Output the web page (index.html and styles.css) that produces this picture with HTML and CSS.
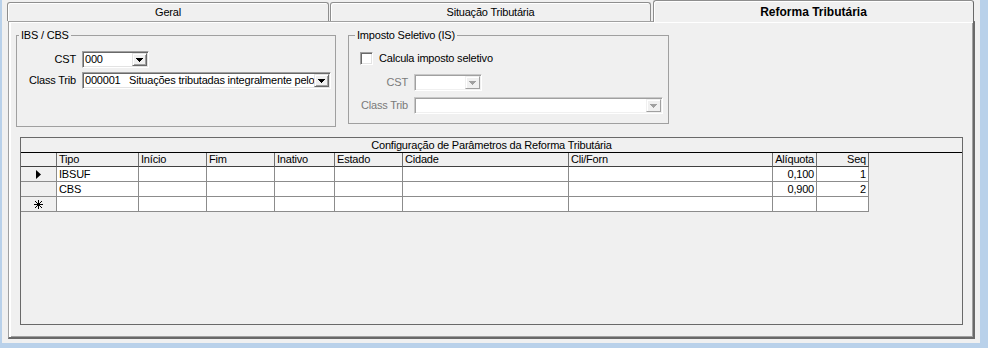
FILE: index.html
```html
<!DOCTYPE html>
<html lang="pt-BR">
<head>
<meta charset="utf-8">
<title>Reforma Tributária</title>
<link rel="stylesheet" href="styles.css">
</head>
<body>
<div class="frame">
  <div class="tabs">
    <div class="tab tab-1">Geral</div>
    <div class="tab tab-2">Situação Tributária</div>
    <div class="tab tab-3 active">Reforma Tributária</div>
  </div>
  <div class="page">
    <div class="groups">
      <fieldset class="group g-ibs">
        <legend>IBS / CBS</legend>
        <div class="form form-ibs">
          <span class="lbl">CST</span>
          <div class="combo w-cst1"><span class="val">000</span><span class="btn"><svg width="7" height="4" viewBox="0 0 7 4"><path d="M0 0h7v1h-1v1h-1v1h-1v1h-1v-1h-1v-1h-1v-1h-1z"/></svg></span></div>
          <span class="lbl">Class Trib</span>
          <div class="combo w-ct"><span class="val">000001   Situações tributadas integralmente pelo</span><span class="btn"><svg width="7" height="4" viewBox="0 0 7 4"><path d="M0 0h7v1h-1v1h-1v1h-1v1h-1v-1h-1v-1h-1v-1h-1z"/></svg></span></div>
        </div>
      </fieldset>
      <fieldset class="group g-is">
        <legend>Imposto Seletivo (IS)</legend>
        <div class="check"><span class="box"></span><span>Calcula imposto seletivo</span></div>
        <div class="form form-is">
          <span class="lbl dis-lbl">CST</span>
          <div class="combo dis w-cst2"><span class="val"></span><span class="btn"><svg width="7" height="4" viewBox="0 0 7 4"><path d="M0 0h7v1h-1v1h-1v1h-1v1h-1v-1h-1v-1h-1v-1h-1z"/></svg></span></div>
          <span class="lbl dis-lbl">Class Trib</span>
          <div class="combo dis w-ct"><span class="val"></span><span class="btn"><svg width="7" height="4" viewBox="0 0 7 4"><path d="M0 0h7v1h-1v1h-1v1h-1v1h-1v-1h-1v-1h-1v-1h-1z"/></svg></span></div>
        </div>
      </fieldset>
    </div>
    <div class="grid">
      <div class="grid-caption">Configuração de Parâmetros da Reforma Tributária</div>
      <div class="row head">
        <span class="ind"></span><span>Tipo</span><span>Início</span><span>Fim</span><span>Inativo</span><span>Estado</span><span>Cidade</span><span>Cli/Forn</span><span class="num">Alíquota</span><span class="num">Seq</span>
      </div>
      <div class="row">
        <span class="ind"><svg width="5" height="9" viewBox="0 0 5 9"><path d="M0 0L5 4.5L0 9z"/></svg></span><span>IBSUF</span><span></span><span></span><span></span><span></span><span></span><span></span><span class="num">0,100</span><span class="num">1</span>
      </div>
      <div class="row">
        <span class="ind"></span><span>CBS</span><span></span><span></span><span></span><span></span><span></span><span></span><span class="num">0,900</span><span class="num">2</span>
      </div>
      <div class="row">
        <span class="ind"><svg width="9" height="9" viewBox="0 0 9 9" shape-rendering="crispEdges"><path d="M4.5 0V9M0 4.5H9M1 1L8 8M8 1L1 8" stroke="#000" stroke-width="1" fill="none"/></svg></span><span></span><span></span><span></span><span></span><span></span><span></span><span></span><span class="num"></span><span class="num"></span>
      </div>
    </div>
  </div>
</div>
</body>
</html>
```
FILE: styles.css
```css
body {
  margin: 0;
  background: #b9d1ea;
  font: 11px "Liberation Sans", Arial, sans-serif;
  letter-spacing: -0.2px;
  color: #000;
}

.frame {
  box-sizing: border-box;
  width: 978px;
  height: 343px;
  margin-left: 2px;
  padding-left: 6px;
  background: #f0f0f0;
}

/* Tabs */
.tabs {
  display: flex;
  height: 21px;
  margin-left: -1px;
}

.tab {
  box-sizing: border-box;
  height: 19px;
  margin-top: 2px;
  border: 1px solid #8e8e8e;
  border-bottom: none;
  border-radius: 3px 3px 0 0;
  background: #f0f0f0;
  box-shadow: inset 1px 1px 0 #fff;
  text-align: center;
  line-height: 18px;
}

.tab-1 { width: 322px; margin-right: 1px; }
.tab-2 { width: 321px; margin-right: 2px; }
.tab-3 { width: 321px; }

.tab.active {
  position: relative;
  z-index: 1;
  height: 22px;
  margin-top: 0;
  margin-bottom: -1px;
  border-color: #8e8e8e #696969 #8e8e8e #8e8e8e;
  font-weight: bold;
  font-size: 12px;
  letter-spacing: 0;
  line-height: 22px;
}

/* Page */
.page {
  box-sizing: border-box;
  width: 967px;
  height: 318px;
  border-style: solid;
  border-width: 1px 2px 2px 1px;
  border-color: #a0a0a0 #696969 #696969 #a0a0a0;
  box-shadow: inset 2px 1px 0 #fff, inset -1px -1px 0 #a0a0a0;
}

.groups {
  display: flex;
  align-items: flex-start;
  gap: 12px;
  margin: 7px 0 0 7px;
}

.group {
  box-sizing: border-box;
  margin: 0;
  padding: 0;
  border: 1px solid #a0a0a0;
  min-width: 0;
}

.group legend {
  padding: 0 2px;
  line-height: 13px;
}

.g-ibs { width: 320px; height: 98px; }
.g-ibs legend { margin-left: 2px; }
.g-is { width: 321px; height: 95px; }
.g-is legend { margin-left: 6px; }

.form {
  display: grid;
  grid-template-columns: 59px auto;
  column-gap: 6px;
  align-items: center;
  justify-items: start;
}

.form-ibs { margin-top: 9px; row-gap: 4px; }
.form-is { margin-top: 9px; row-gap: 6px; }

.lbl { justify-self: end; line-height: 13px; }
.dis-lbl { color: #7a7a7a; }

/* Combo box */
.combo {
  box-sizing: border-box;
  display: flex;
  height: 17px;
  padding: 1px;
  border: 1px solid;
  border-color: #a0a0a0 #fff #fff #a0a0a0;
  box-shadow: inset 1px 1px 0 #696969, inset -1px -1px 0 #e3e3e3;
  background: #fff;
}

.w-cst1 { width: 67px; }
.w-cst2 { width: 68px; }
.w-ct { width: 249px; }

.combo .val {
  flex: 1;
  min-width: 0;
  overflow: hidden;
  white-space: pre;
  padding-left: 1px;
  line-height: 13px;
  background: #fff;
}

.combo .btn {
  box-sizing: border-box;
  display: flex;
  align-items: center;
  justify-content: center;
  width: 15px;
  height: 13px;
  border: 1px solid;
  border-color: #e3e3e3 #696969 #696969 #e3e3e3;
  box-shadow: inset 1px 1px 0 #fff, inset -1px -1px 0 #a0a0a0;
  background: #f0f0f0;
}

.combo .btn svg { fill: #000; }

.combo.dis {
  border-color: #c8c8c8 #fff #fff #c8c8c8;
  box-shadow: inset 1px 1px 0 #a0a0a0, inset -1px -1px 0 #f0f0f0;
}

.combo.dis .btn {
  border-color: #f0f0f0 #a0a0a0 #a0a0a0 #f0f0f0;
  box-shadow: inset 1px 1px 0 #fff;
}

.combo.dis .btn svg { fill: #a0a0a0; }

/* Checkbox */
.check {
  display: flex;
  align-items: center;
  gap: 6px;
  margin: 10px 0 0 11px;
  line-height: 13px;
}

.box {
  box-sizing: border-box;
  width: 13px;
  height: 13px;
  border: 1px solid;
  border-color: #a0a0a0 #fff #fff #a0a0a0;
  box-shadow: inset 1px 1px 0 #696969, inset -1px -1px 0 #e3e3e3;
  background: #fff;
}

/* Grid */
.grid {
  box-sizing: border-box;
  width: 943px;
  height: 188px;
  margin: 10px 0 0 11px;
  border: 1px solid #696969;
}

.grid-caption {
  box-sizing: border-box;
  height: 15px;
  border-bottom: 1px solid #000;
  text-align: center;
  line-height: 14px;
}

.row {
  display: grid;
  grid-template-columns: 36px 82px 68px 68px 60px 68px 166px 204px 44px 52px;
  height: 15px;
}

.row > span {
  box-sizing: border-box;
  border-right: 1px solid #8c8c8c;
  border-bottom: 1px solid #8c8c8c;
  background: #fff;
  padding: 0 2px;
  line-height: 14px;
  overflow: hidden;
  white-space: nowrap;
}

.row.head { height: 14px; }

.row.head > span {
  background: #f0f0f0;
  border-right-color: #6d6d6d;
  border-bottom-color: #404040;
  line-height: 13px;
}

.row > .ind {
  display: flex;
  align-items: center;
  justify-content: center;
  padding: 0;
  background: #f0f0f0;
}

.row > .num { text-align: right; }
```
